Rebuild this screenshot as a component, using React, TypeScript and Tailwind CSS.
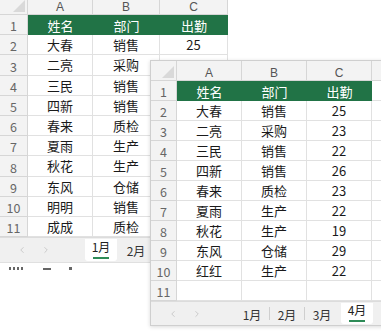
import React from "react";
import { ChevronLeft, ChevronRight } from "lucide-react";

const GREEN = "bg-[#217346]";

type SheetProps = {
  grid: string;
  headH: string;
  rowH: string;
  letters: string[];
  data: string[][];
  tabs: string[];
  active: number;
  tabBarH: string;
  extra?: boolean;
};

function Sheet({ grid, headH, rowH, letters, data, tabs, active, tabBarH, extra }: SheetProps) {
  return (
    <div className="flex flex-col bg-white">
      <div className={`${grid} ${headH} bg-[#f3f3f3]`}>
        <div className="relative border-r border-b border-[#d6d6d6]">
          <div className="absolute right-[2px] bottom-[2px] w-0 h-0 border-l-[12px] border-l-transparent border-b-[12px] border-b-[#d9d9d9]" />
        </div>
        {letters.map((l) => (
          <div
            key={l}
            className="flex items-end justify-center pb-[1px] border-r border-b border-[#d6d6d6] font-['Liberation_Sans',sans-serif] text-[12px] leading-[12px] text-[#555]"
          >
            {l}
          </div>
        ))}
        {extra && <div className="border-b border-[#d6d6d6]" />}
      </div>
      {data.map((row, i) => (
        <div key={i} className={`${grid} ${rowH}`}>
          <div className="flex items-end justify-center bg-[#f3f3f3] border-r border-b border-[#d6d6d6] text-[12.5px] leading-[16px] text-[#666]">
            {i + 1}
          </div>
          {row.map((c, j) =>
            i === 0 ? (
              <div
                key={j}
                className={`flex items-center justify-center ${GREEN} text-white text-[13px] leading-none`}
              >
                {c}
              </div>
            ) : (
              <div
                key={j}
                className="flex items-center justify-center border-r border-b border-[#e1e1e1] text-[13px] leading-none text-[#1a1a1a]"
              >
                {c}
              </div>
            )
          )}
          {extra && <div className="border-b border-[#e1e1e1]" />}
        </div>
      ))}
      <div className={`flex ${tabBarH} bg-[#f0f0f0] border-t border-[#dcdcdc]`}>
        <div className="w-[83px] shrink-0 flex items-center text-[#b4b4b4]">
          <ChevronLeft size={10} strokeWidth={1.5} className="ml-[17px]" />
          <ChevronRight size={10} strokeWidth={1.5} className="ml-[14px]" />
        </div>
        {tabs.map((t, i) => {
          const isActive = i === active;
          const sep = i > 0 && i !== active && i - 1 !== active;
          return (
            <div key={t} className="flex w-[35px] shrink-0 items-stretch">
              <div className="w-px flex items-center">
                {sep && <div className="w-px h-[13px] bg-[#cfcfcf]" />}
              </div>
              {isActive ? (
                <div className="flex-1 ml-[1px] mr-[1px] mt-[1px] mb-[1px] bg-white rounded-b-[3px] flex flex-col items-center justify-end pb-[2px]">
                  <span className="text-[12px] leading-[14px] text-[#222]">{t}</span>
                  <div className="mt-[3px] w-[16px] h-[2px] bg-[#2e8b57]" />
                </div>
              ) : (
                <div className="flex-1 flex items-center justify-center pt-[2px] text-[12px] text-[#333]">
                  {t}
                </div>
              )}
            </div>
          );
        })}
      </div>
    </div>
  );
}

const data1: string[][] = [
  ["姓名", "部门", "出勤"],
  ["大春", "销售", "25"],
  ["二亮", "采购", ""],
  ["三民", "销售", ""],
  ["四新", "销售", ""],
  ["春来", "质检", ""],
  ["夏雨", "生产", ""],
  ["秋花", "生产", ""],
  ["东风", "仓储", ""],
  ["明明", "销售", ""],
  ["成成", "质检", ""],
];

const data2: string[][] = [
  ["姓名", "部门", "出勤"],
  ["大春", "销售", "25"],
  ["二亮", "采购", "23"],
  ["三民", "销售", "22"],
  ["四新", "销售", "26"],
  ["春来", "质检", "23"],
  ["夏雨", "生产", "22"],
  ["秋花", "生产", "19"],
  ["东风", "仓储", "29"],
  ["红红", "生产", "22"],
  ["", "", ""],
];

export default function App() {
  return (
    <div className="relative w-[381px] h-[332px] overflow-hidden bg-white font-['Noto_Sans_CJK_SC','Noto_Sans',sans-serif]">
      {/* Window 1 */}
      <div className="absolute left-0 top-0 w-[228px] h-[273px] overflow-hidden">
        <Sheet
          grid="grid grid-cols-[28px_65px_67px_68px]"
          headH="h-[15px]"
          rowH="h-[20.2px]"
          letters={["A", "B", "C"]}
          data={data1}
          tabs={["1月", "2月"]}
          active={0}
          tabBarH="h-[25px]"
        />
        <div className="flex items-start h-[12px] border-t border-[#e0e0e0] bg-white">
          <div className="ml-[9px] mt-[4px] flex gap-[2px]">
            <div className="w-[2px] h-[3px] bg-[#666]" />
            <div className="w-[2px] h-[3px] bg-[#666]" />
            <div className="w-[2px] h-[3px] bg-[#666]" />
            <div className="w-[2px] h-[3px] bg-[#666]" />
          </div>
          <div className="ml-[20px] mt-[5px] w-[8px] h-[2px] bg-[#666]" />
          <div className="ml-[18px] mt-[4px] w-[3px] h-[3px] bg-[#666]" />
        </div>
      </div>

      {/* Window 2 */}
      <div className="absolute left-[150px] top-[60px] w-[250px] border border-[#cfcfcf] shadow-[0_1px_4px_rgba(0,0,0,0.15)] bg-white">
        <Sheet
          grid="grid grid-cols-[26px_65px_65px_65px_1fr]"
          headH="h-[20px]"
          rowH="h-[20px]"
          letters={["A", "B", "C"]}
          data={data2}
          tabs={["1月", "2月", "3月", "4月"]}
          active={3}
          tabBarH="h-[24px]"
          extra
        />
      </div>
    </div>
  );
}
